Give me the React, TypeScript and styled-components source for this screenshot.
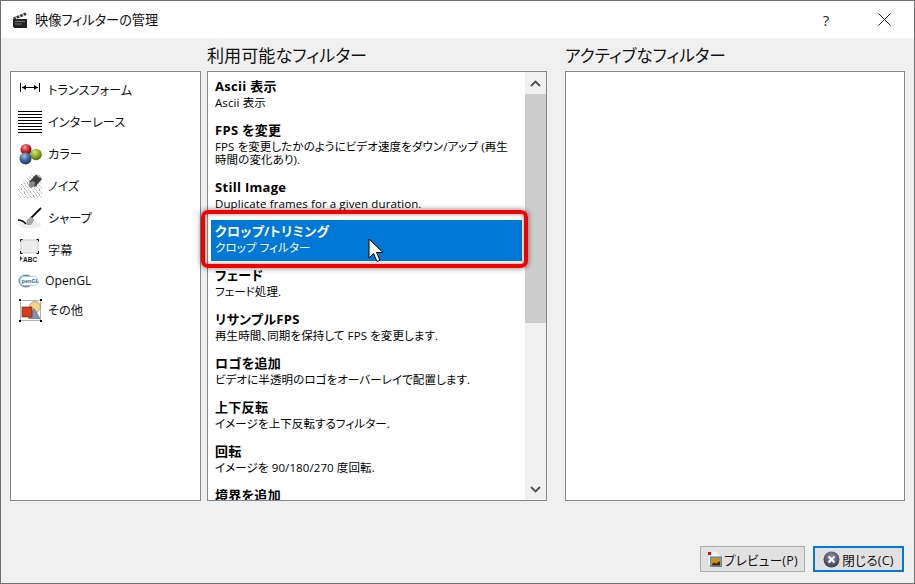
import styled, { createGlobalStyle } from "styled-components";
import type { ReactNode } from "react";

const GlobalStyle = createGlobalStyle`
  html, body {
    margin: 0;
    padding: 0;
    overflow: hidden;
  }
  body {
    font-family: "Open Sans", "Noto Sans CJK JP", sans-serif;
    font-feature-settings: "palt";
  }
`;

const Window = styled.div`
  box-sizing: border-box;
  position: relative;
  width: 915px;
  height: 584px;
  display: flex;
  flex-direction: column;
  background: #f0f0f0;
  border: 1px solid #6f6f6f;
  color: #000;
  overflow: hidden;
`;

const TitleBar = styled.div`
  height: 37px;
  flex: none;
  display: flex;
  align-items: center;
  background: #fff;
  padding: 0 1px 0 11px;
  gap: 7px;
`;

const TitleText = styled.div`
  flex: 1;
  font-size: 13.2px;
  color: #111;
`;

const TitleButtons = styled.div`
  display: flex;
`;

const TitleButton = styled.div`
  width: 58px;
  height: 37px;
  display: flex;
  align-items: center;
  justify-content: center;
  font-size: 15px;
  color: #222;
`;

const Columns = styled.div`
  display: grid;
  grid-template-columns: 191px 346px 358px;
  grid-template-rows: 33px 430px;
  padding-left: 9px;
`;

const Heading = styled.div<{ $left: number; $size: number }>`
  margin-left: ${(p) => p.$left}px;
  font-size: ${(p) => p.$size}px;
  line-height: 35px;
  height: 33px;
  color: #111;
  white-space: nowrap;
`;

const Panel = styled.div<{ $left: number }>`
  box-sizing: border-box;
  margin-left: ${(p) => p.$left}px;
  height: 430px;
  background: #fff;
  border: 1px solid #828790;
  overflow: hidden;
`;

const CategoryList = styled(Panel)`
  padding-top: 2px;
  width: 191px;
`;

const CategoryRow = styled.div<{ $height: number }>`
  height: ${(p) => p.$height}px;
  display: flex;
  align-items: center;
  gap: 6px;
  padding-left: 7px;
  font-size: 12.2px;
  color: #111;
`;

const IconSlot = styled.span<{ $width: number }>`
  display: flex;
  width: ${(p) => p.$width}px;
  justify-content: center;
  flex: none;
`;

const FilterPanel = styled(Panel)`
  display: flex;
  width: 340px;
`;

const FilterList = styled.div`
  flex: 1;
  min-width: 0;
  padding: 3px 3px 0 3px;
  overflow: hidden;
`;

const FilterRow = styled.div<{ $selected?: boolean }>`
  padding: 4px 4px 7px;
  margin-bottom: 3px;
  background: ${(p) => (p.$selected ? "#0078d7" : "transparent")};
  color: ${(p) => (p.$selected ? "#fff" : "#000")};
`;

const FilterName = styled.div`
  font-size: 13px;
  font-weight: 700;
  line-height: 15px;
  letter-spacing: 0.3px;
  white-space: nowrap;
`;

const FilterDesc = styled.div`
  font-size: 11.5px;
  line-height: 13px;
  margin-top: 2px;
  letter-spacing: 0.1px;
  white-space: pre-line;
`;

const ScrollBar = styled.div`
  width: 21px;
  flex: none;
  display: flex;
  flex-direction: column;
  background: #f0f0f0;
`;

const ScrollArrow = styled.div`
  height: 22px;
  flex: none;
  display: flex;
  align-items: center;
  justify-content: center;
`;

const ScrollThumb = styled.div`
  height: 229px;
  flex: none;
  background: #cdcdcd;
`;

const ScrollSpace = styled.div`
  flex: 1;
`;

const Footer = styled.div`
  flex: 1;
  display: flex;
  justify-content: flex-end;
  align-items: flex-start;
  gap: 8px;
  padding: 45px 10px 0 0;
`;

const Button = styled.div<{ $width: number; $focused?: boolean }>`
  box-sizing: border-box;
  width: ${(p) => p.$width}px;
  height: 26px;
  display: flex;
  align-items: center;
  justify-content: center;
  gap: 2px;
  font-size: 12.6px;
  letter-spacing: 0.2px;
  color: #111;
  background: #e1e1e1;
  border: ${(p) => (p.$focused ? "2px solid #0078d7" : "1px solid #adadad")};
`;

const Highlight = styled.div`
  position: absolute;
  left: 200px;
  top: 209px;
  width: 327px;
  height: 58px;
  box-sizing: border-box;
  border: 4px solid #f30000;
  border-radius: 7px;
  box-shadow: 0 0 5px 1px rgba(0, 0, 0, 0.4), inset 0 0 4px rgba(0, 0, 0, 0.45);
`;

const Pointer = styled.svg`
  position: absolute;
  left: 367px;
  top: 237px;
`;

const Clapper = () => (
  <svg width="16" height="18" viewBox="0 0 16 18">
    <path d="M1 8h14v9H2.500L1 15.500z" fill="#222" />
    <path d="M1 6.500 13.500 1.500l1 2.400L2 8.800z" fill="#333" />
    <path d="M3.500 5.500 5 7.800M7 4.200l1.500 2.300M10.500 2.800 12 5.100" stroke="#ddd" strokeWidth="1.300" />
    <path d="M3 10.500h10M3 13h7" stroke="#777" strokeWidth="1" />
  </svg>
);

const TransformIcon = () => (
  <svg width="20" height="17" viewBox="0 0 20 17">
    <path d="M.5 1v9M19.500 1v9M2 5.500h16" stroke="#000" fill="none" />
    <path d="M2 5.500 6 3v5zM18 5.500 14 3v5z" fill="#000" />
  </svg>
);

const InterlaceIcon = () => (
  <svg width="24" height="23" viewBox="0 0 24 23">
    {[0, 1, 2, 3, 4, 5, 6, 7].map((i) => (
      <rect key={i} x="0" y={i * 3} width="24" height="1" fill="#000" />
    ))}
  </svg>
);

const ColorIcon = () => (
  <svg width="23" height="21" viewBox="0 0 23 21">
    <defs>
      <radialGradient id="sr" cx="0.4" cy="0.3" r="0.8">
        <stop offset="0" stopColor="#f5a0a0" />
        <stop offset="0.5" stopColor="#c42020" />
        <stop offset="1" stopColor="#5a0808" />
      </radialGradient>
      <radialGradient id="sg" cx="0.4" cy="0.3" r="0.8">
        <stop offset="0" stopColor="#d8e890" />
        <stop offset="0.5" stopColor="#8aa81c" />
        <stop offset="1" stopColor="#3c4c08" />
      </radialGradient>
      <radialGradient id="sb" cx="0.4" cy="0.3" r="0.8">
        <stop offset="0" stopColor="#a8bce0" />
        <stop offset="0.5" stopColor="#3f5f98" />
        <stop offset="1" stopColor="#16264a" />
      </radialGradient>
    </defs>
    <circle cx="17" cy="10.500" r="5.800" fill="url(#sg)" />
    <circle cx="7" cy="5.500" r="5.500" fill="url(#sr)" />
    <circle cx="6.500" cy="14.500" r="6" fill="url(#sb)" />
  </svg>
);

const NoiseIcon = () => {
  const dots = [];
  for (let i = 0; i < 260; i++) {
    const x = (i * 37) % 24;
    const y = (i * 23 + (i % 7) * 5) % 24;
    const dense = x + y > 12 || y > 12;
    if (dense) dots.push(<rect key={i} x={x} y={y} width="1" height="1" fill={i % 3 ? "#d4d4d4" : "#a8a8a8"} />);
  }
  return (
    <svg width="24" height="24" viewBox="0 0 24 24">
      {dots}
      <path d="M11 8 18 .5l6 4.500-7 8z" fill="#3a3a3a" />
      <path d="M19 1.500l3.500 2.500" stroke="#8a8a8a" strokeWidth="1.200" />
      <ellipse cx="13.800" cy="10.500" rx="2.600" ry="3.600" fill="#888" transform="rotate(40 13.800 10.500)" />
    </svg>
  );
};

const SharpIcon = () => (
  <svg width="24" height="22" viewBox="0 0 24 22">
    <ellipse cx="12" cy="18" rx="11" ry="3.500" fill="#eee" />
    <path d="M0 13c3 0 6 1.500 8 4" stroke="#000" strokeWidth="1.600" fill="none" />
    <path d="M13 11 23 1" stroke="#111" strokeWidth="1.800" />
    <path d="M9 13.500 13 10l3 3-3 4.500H9z" fill="#aaa" stroke="#777" strokeWidth=".5" />
  </svg>
);

const SubtitleIcon = () => (
  <svg width="20" height="23" viewBox="0 0 20 23">
    <rect x="1" y="1" width="17" height="13" fill="#ececec" stroke="#ccc" />
    <path d="M.5 2.500V.5h2M16.500.5h2v2M.5 12v2.500h2M16.500 14.500h2V12" stroke="#000" fill="none" />
    <path d="M0 17v5l2.500-2.500z" fill="#335" />
    <text x="3" y="22.500" fontFamily="Liberation Sans" fontWeight="700" fontSize="6.500" fill="#111">ABC</text>
  </svg>
);

const OpenGlIcon = () => (
  <svg width="21" height="14" viewBox="0 0 21 14">
    <ellipse cx="8" cy="7" rx="7.500" ry="6.500" fill="#5b8fa8" />
    <path d="M5 2.500h11.500c2 0 3.500 1.500 3.500 4.500s-1.500 4.500-3.500 4.500H5C3 11.500 2 9 2 7s1-4.500 3-4.500z" fill="#fff" stroke="#a9c4d2" strokeWidth=".8" />
    <text x="3.500" y="9.300" fontFamily="Liberation Sans" fontWeight="700" fontSize="5.600" fill="#2f6a8a">penGL</text>
  </svg>
);

const OtherIcon = () => (
  <svg width="23" height="23" viewBox="0 0 23 23">
    <rect x="1.500" y="1.500" width="20" height="20" fill="none" stroke="#666" strokeDasharray="1 1" />
    <path d="M0 0h2v2H0zM21 0h2v2h-2zM0 21h2v2H0zM21 21h2v2h-2z" fill="#000" />
    <circle cx="16" cy="8" r="5.500" fill="#f0d68a" stroke="#8a7a3a" strokeWidth=".6" />
    <path d="M9.500 19.500 15 9.500l6 10z" fill="#7f93b2" stroke="#4c5c78" strokeWidth=".6" />
    <rect x="3" y="8" width="10" height="10" fill="#d63d1e" stroke="#5c1c0c" strokeWidth=".6" />
  </svg>
);

const PreviewIcon = () => (
  <svg width="15" height="16" viewBox="0 0 15 16">
    <path d="M1 0h8l4 4v2H5v9H1z" fill="#f2f5fb" stroke="#c4d0e4" strokeWidth=".6" />
    <rect x="1" y="1" width="3" height="3" fill="#f00000" />
    <rect x="3.500" y="6" width="11" height="9.500" fill="#c8921c" stroke="#4a88e0" />
    <path d="M5 13.500c2-3 3-1 4-1s2-2 4-2v4H5z" fill="#3c2c08" />
  </svg>
);

const CloseIcon = () => (
  <svg width="17" height="17" viewBox="0 0 17 17">
    <defs>
      <radialGradient id="cb" cx="0.5" cy="0.35" r="0.7">
        <stop offset="0" stopColor="#8a90a4" />
        <stop offset="1" stopColor="#353a4c" />
      </radialGradient>
    </defs>
    <circle cx="8.500" cy="8.500" r="8" fill="url(#cb)" />
    <path d="M5.500 5.500l6 6M11.500 5.500l-6 6" stroke="#fff" strokeWidth="2.400" />
  </svg>
);

const categories: { label: string; icon: ReactNode; slot: number; height: number }[] = [
  { label: "トランスフォーム", icon: <TransformIcon />, slot: 24, height: 32 },
  { label: "インターレース", icon: <InterlaceIcon />, slot: 24, height: 32 },
  { label: "カラー", icon: <ColorIcon />, slot: 24, height: 32 },
  { label: "ノイズ", icon: <NoiseIcon />, slot: 24, height: 32 },
  { label: "シャープ", icon: <SharpIcon />, slot: 24, height: 32 },
  { label: "字幕", icon: <SubtitleIcon />, slot: 24, height: 32 },
  { label: "OpenGL", icon: <OpenGlIcon />, slot: 21, height: 29 },
  { label: "その他", icon: <OtherIcon />, slot: 24, height: 30 },
];

const filters = [
  { name: "Ascii 表示", desc: "Ascii 表示" },
  { name: "FPS を変更", desc: "FPS を変更したかのようにビデオ速度をダウン/アップ (再生\n時間の変化あり)." },
  { name: "Still Image", desc: "Duplicate frames for a given duration." },
  { name: "クロップ/トリミング", desc: "クロップ フィルター", selected: true },
  { name: "フェード", desc: "フェード処理." },
  { name: "リサンプルFPS", desc: "再生時間、同期を保持して FPS を変更します." },
  { name: "ロゴを追加", desc: "ビデオに半透明のロゴをオーバーレイで配置します." },
  { name: "上下反転", desc: "イメージを上下反転するフィルター." },
  { name: "回転", desc: "イメージを 90/180/270 度回転." },
  { name: "境界を追加", desc: "" },
];

const App = () => {
  return (
    <>
      <GlobalStyle />
      <Window>
        <TitleBar>
          <Clapper />
          <TitleText>映像フィルターの管理</TitleText>
          <TitleButtons>
            <TitleButton>?</TitleButton>
            <TitleButton>
              <svg width="13" height="13" viewBox="0 0 13 13">
                <path d="M.5.5l12 12M12.500.5l-12 12" stroke="#222" fill="none" />
              </svg>
            </TitleButton>
          </TitleButtons>
        </TitleBar>
        <Columns>
          <div />
          <Heading $left={6} $size={17.1}>利用可能なフィルター</Heading>
          <Heading $left={18} $size={16.7}>アクティブなフィルター</Heading>
          <CategoryList $left={0}>
            {categories.map((c) => (
              <CategoryRow key={c.label} $height={c.height}>
                <IconSlot $width={c.slot}>{c.icon}</IconSlot>
                {c.label}
              </CategoryRow>
            ))}
          </CategoryList>
          <FilterPanel $left={6}>
            <FilterList>
              {filters.map((f) => (
                <FilterRow key={f.name} $selected={f.selected}>
                  <FilterName>{f.name}</FilterName>
                  <FilterDesc>{f.desc}</FilterDesc>
                </FilterRow>
              ))}
            </FilterList>
            <ScrollBar>
              <ScrollArrow>
                <svg width="11" height="7" viewBox="0 0 11 7">
                  <path d="M1 6l4.500-4.500L10 6" stroke="#505050" strokeWidth="1.800" fill="none" />
                </svg>
              </ScrollArrow>
              <ScrollThumb />
              <ScrollSpace />
              <ScrollArrow>
                <svg width="11" height="7" viewBox="0 0 11 7">
                  <path d="M1 1l4.500 4.500L10 1" stroke="#505050" strokeWidth="1.800" fill="none" />
                </svg>
              </ScrollArrow>
            </ScrollBar>
          </FilterPanel>
          <Panel $left={18} />
        </Columns>
        <Footer>
          <Button $width={105}>
            <PreviewIcon />
            プレビュー(P)
          </Button>
          <Button $width={91} $focused>
            <CloseIcon />
            閉じる(C)
          </Button>
        </Footer>
        <Highlight />
        <Pointer width="16" height="25" viewBox="0 0 16 25">
          <path d="M1 1v19l4.500-4.500 3.500 8 3-1.300-3.500-7.700H15z" fill="#fff" stroke="#000" />
        </Pointer>
      </Window>
    </>
  );
};

export default App;
